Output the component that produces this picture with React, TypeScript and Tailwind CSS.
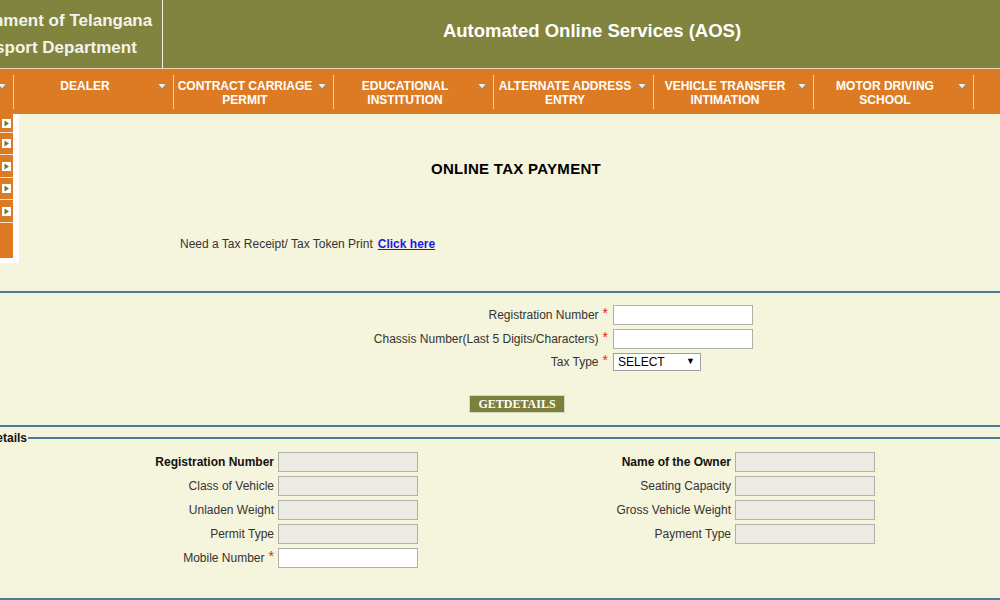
import React from "react";

const navItems: string[][] = [
  ["HOME", ""],
  ["DEALER", ""],
  ["CONTRACT CARRIAGE", "PERMIT"],
  ["EDUCATIONAL", "INSTITUTION"],
  ["ALTERNATE ADDRESS", "ENTRY"],
  ["VEHICLE TRANSFER", "INTIMATION"],
  ["MOTOR DRIVING", "SCHOOL"],
];

function NavTri() {
  return (
    <svg width="10" height="7" viewBox="0 0 10 7">
      <polygon points="0.5,0.5 9.5,0.5 5,6" fill="#eeeeee" stroke="#8a8a8a" strokeWidth="1" />
    </svg>
  );
}

function SideIcon() {
  return (
    <svg width="9" height="9" viewBox="0 0 9 9">
      <rect x="0" y="0" width="9" height="9" fill="#ffffff" />
      <polygon points="2.5,1.5 7,4.5 2.5,7.5" fill="#6f7b2c" />
    </svg>
  );
}

function Req() {
  return <span className="ml-[4px] text-[14px] leading-none text-[#ee2222] relative -top-[2px]">*</span>;
}

function Disabled() {
  return <div className="w-[140px] h-[20px] bg-[#ebebe4] border border-[#b0b0a8]" />;
}

function Field({ label, bold, req, white }: { label: string; bold?: boolean; req?: boolean; white?: boolean }) {
  return (
    <>
      <div
        className={
          "flex items-center justify-end whitespace-nowrap " +
          (bold ? "font-bold text-[#111]" : "text-[#333]")
        }
      >
        {label}
        {req ? <Req /> : null}
      </div>
      <div className="ml-[4px]">
        {white ? <div className="w-[140px] h-[20px] bg-white border border-[#b0b0a8]" /> : <Disabled />}
      </div>
    </>
  );
}

export default function App() {
  return (
    <div className="w-[1000px] h-[600px] overflow-hidden bg-[#f5f4dc] font-['Liberation_Sans',Arial,sans-serif] text-[12px] text-[#333]">
      {/* Header */}
      <div className="flex h-[68px] bg-[#80843e] text-[#f4f4ee]">
        <div className="w-[163px] border-r border-[#f4f4ee] overflow-hidden flex items-center">
          <div className="w-[220px] -ml-[62px] shrink-0 text-center font-bold text-[17px] leading-[27px]">
            <div>Government of Telangana</div>
            <div>Transport Department</div>
          </div>
        </div>
        <div className="flex-1 pl-[21px] pb-[6px] flex items-center justify-center font-bold text-[18.5px] text-white">
          Automated Online Services (AOS)
        </div>
      </div>

      {/* Nav */}
      <div className="flex h-[46px] bg-[#dd7b25] border-t border-[#e9d8b8] overflow-hidden">
        <div className="flex -ml-[146px] shrink-0">
          {navItems.map((it, i) => (
            <div key={i} className="flex w-[160px] shrink-0">
              <div className="w-[142px] pt-[10px] text-center text-white font-bold text-[12px] leading-[14px]">
                <div>{it[0]}</div>
                {it[1] ? <div>{it[1]}</div> : null}
              </div>
              <div className="w-[17px] pt-[14px] pl-[1px]">
                <NavTri />
              </div>
              <div className="w-px h-[34px] mt-[6px] bg-[#f5cfa6]" />
            </div>
          ))}
        </div>
      </div>

      {/* Top section */}
      <div className="flex h-[177px]">
        <div className="w-[19px] h-[149px] bg-white pr-[6px] pb-[5px] shrink-0">
          <div className="flex flex-col h-full bg-[#dd7b25]">
            <div className="h-[18px] flex items-center pl-[2px]"><SideIcon /></div>
            <div className="h-[22px] border-t border-[#f3e3cf] flex items-center pl-[2px]"><SideIcon /></div>
            <div className="h-[23px] border-t border-[#f3e3cf] flex items-center pl-[2px]"><SideIcon /></div>
            <div className="h-[22px] border-t border-[#f3e3cf] flex items-center pl-[2px]"><SideIcon /></div>
            <div className="h-[23px] border-t border-[#f3e3cf] flex items-center pl-[2px]"><SideIcon /></div>
            <div className="flex-1 border-t border-[#f3e3cf]" />
          </div>
        </div>
        <div className="flex-1 flex flex-col">
          <div className="pl-[13px] mt-[46px] text-center font-bold text-[15px] leading-[18px] tracking-[0.3px] text-black">
            ONLINE TAX PAYMENT
          </div>
          <div className="ml-[161px] mt-[59px] leading-[14px] whitespace-nowrap">
            Need a Tax Receipt/ Tax Token Print
            <a className="ml-[5px] font-bold text-[#1a1ae6] underline">Click here</a>
          </div>
        </div>
      </div>

      <div className="h-[2px] bg-[#4d7a97]" />

      {/* Search form */}
      <div className="h-[132px] pt-[12px]">
        <div className="flex items-center h-[20px]">
          <div className="w-[608px] flex justify-end items-center">Registration Number<Req /></div>
          <div className="ml-[5px] w-[140px] h-[20px] bg-white border border-[#b0b0a8]" />
        </div>
        <div className="flex items-center h-[20px] mt-[4px]">
          <div className="w-[608px] flex justify-end items-center">Chassis Number(Last 5 Digits/Characters)<Req /></div>
          <div className="ml-[5px] w-[140px] h-[20px] bg-white border border-[#b0b0a8]" />
        </div>
        <div className="flex items-center h-[17px] mt-[4px]">
          <div className="w-[608px] flex justify-end items-center">Tax Type<Req /></div>
          <div className="ml-[5px] w-[88px] h-[18px] bg-white border border-[#a0a0a0] flex items-center justify-between pl-[4px] pr-[5px] text-[12px] text-black">
            <span>SELECT</span>
            <span className="text-[9px]">▼</span>
          </div>
        </div>
        <div className="flex justify-center pl-[34px] mt-[25px]">
          <div className="w-[96px] h-[18px] bg-[#7d803a] border border-[#d8d8c0] flex items-center justify-center text-white font-bold text-[12px] font-['Liberation_Serif',serif]">
            GETDETAILS
          </div>
        </div>
      </div>

      <div className="h-[2px] bg-[#4d7a97]" />

      {/* Vehicle details */}
      <div className="h-[170px]">
        <div className="flex items-center h-[20px] mt-px">
          <div className="w-[27px] flex justify-end shrink-0">
            <span className="whitespace-nowrap font-bold text-[12px] text-[#111]">Vehicle Details</span>
          </div>
          <div className="flex-1 h-[2px] bg-[#4d7a97] ml-[1px]" />
        </div>
        <div className="mt-[4px] grid grid-cols-[274px_144px_313px_144px] gap-y-[4px] auto-rows-[20px]">
          <Field label="Registration Number" bold />
          <Field label="Name of the Owner" bold />
          <Field label="Class of Vehicle" />
          <Field label="Seating Capacity" />
          <Field label="Unladen Weight" />
          <Field label="Gross Vehicle Weight" />
          <Field label="Permit Type" />
          <Field label="Payment Type" />
          <Field label="Mobile Number" req white />
        </div>
      </div>

      <div className="h-[2px] bg-[#4d7a97]" />
    </div>
  );
}
